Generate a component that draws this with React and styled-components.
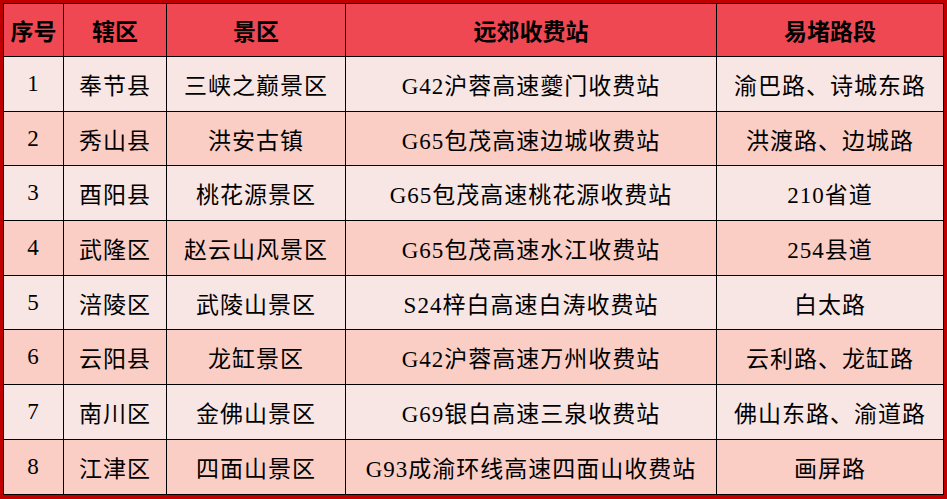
import React from 'react';
import styled, { createGlobalStyle } from 'styled-components';

const GlobalStyle = createGlobalStyle`
  html, body {
    margin: 0;
    padding: 0;
    background: #c00000;
  }
`;

const Frame = styled.div`
  box-sizing: border-box;
  width: 947px;
  height: 499px;
  padding: 3px 4px 3px 3px;
  background-color: #c00000;
  overflow: hidden;
`;

const Table = styled.table`
  width: 940px;
  border-collapse: collapse;
  table-layout: fixed;
  border: 1px solid #000;
`;

const HeadCell = styled.th`
  height: 52px;
  padding: 0;
  border: 1px solid #000;
  background-color: #ef4853;
  color: #000;
  font-family: 'Noto Sans CJK SC', 'Noto Sans', sans-serif;
  font-size: 23px;
  font-weight: 700;
  text-align: center;
  vertical-align: middle;
`;

const Row = styled.tr`
  background-color: ${(props) => (props.odd ? '#f8e6e4' : '#fbcec5')};
`;

const Cell = styled.td`
  height: 53.7px;
  padding: 0;
  border: 1px solid #000;
  color: #000;
  font-family: 'Liberation Serif', 'Noto Sans CJK SC', serif;
  font-size: 23px;
  font-weight: 400;
  letter-spacing: 1px;
  text-align: center;
  vertical-align: middle;
  white-space: nowrap;
`;

const widths = [60, 103, 179, 371, 227];
const headers = ['序号', '辖区', '景区', '远郊收费站', '易堵路段'];

const rows = [
  ['1', '奉节县', '三峡之巅景区', 'G42沪蓉高速夔门收费站', '渝巴路、诗城东路'],
  ['2', '秀山县', '洪安古镇', 'G65包茂高速边城收费站', '洪渡路、边城路'],
  ['3', '酉阳县', '桃花源景区', 'G65包茂高速桃花源收费站', '210省道'],
  ['4', '武隆区', '赵云山风景区', 'G65包茂高速水江收费站', '254县道'],
  ['5', '涪陵区', '武陵山景区', 'S24梓白高速白涛收费站', '白太路'],
  ['6', '云阳县', '龙缸景区', 'G42沪蓉高速万州收费站', '云利路、龙缸路'],
  ['7', '南川区', '金佛山景区', 'G69银白高速三泉收费站', '佛山东路、渝道路'],
  ['8', '江津区', '四面山景区', 'G93成渝环线高速四面山收费站', '画屏路'],
];

const App = () => {
  return (
    <>
      <GlobalStyle />
      <Frame>
        <Table>
          <colgroup>
            {widths.map((w, i) => (
              <col key={i} style={{ width: w }} />
            ))}
          </colgroup>
          <thead>
            <tr>
              {headers.map((h) => (
                <HeadCell key={h}>{h}</HeadCell>
              ))}
            </tr>
          </thead>
          <tbody>
            {rows.map((r, i) => (
              <Row key={r[0]} odd={i % 2 === 0}>
                {r.map((c, j) => (
                  <Cell key={j}>{c}</Cell>
                ))}
              </Row>
            ))}
          </tbody>
        </Table>
      </Frame>
    </>
  );
};

export default App;
